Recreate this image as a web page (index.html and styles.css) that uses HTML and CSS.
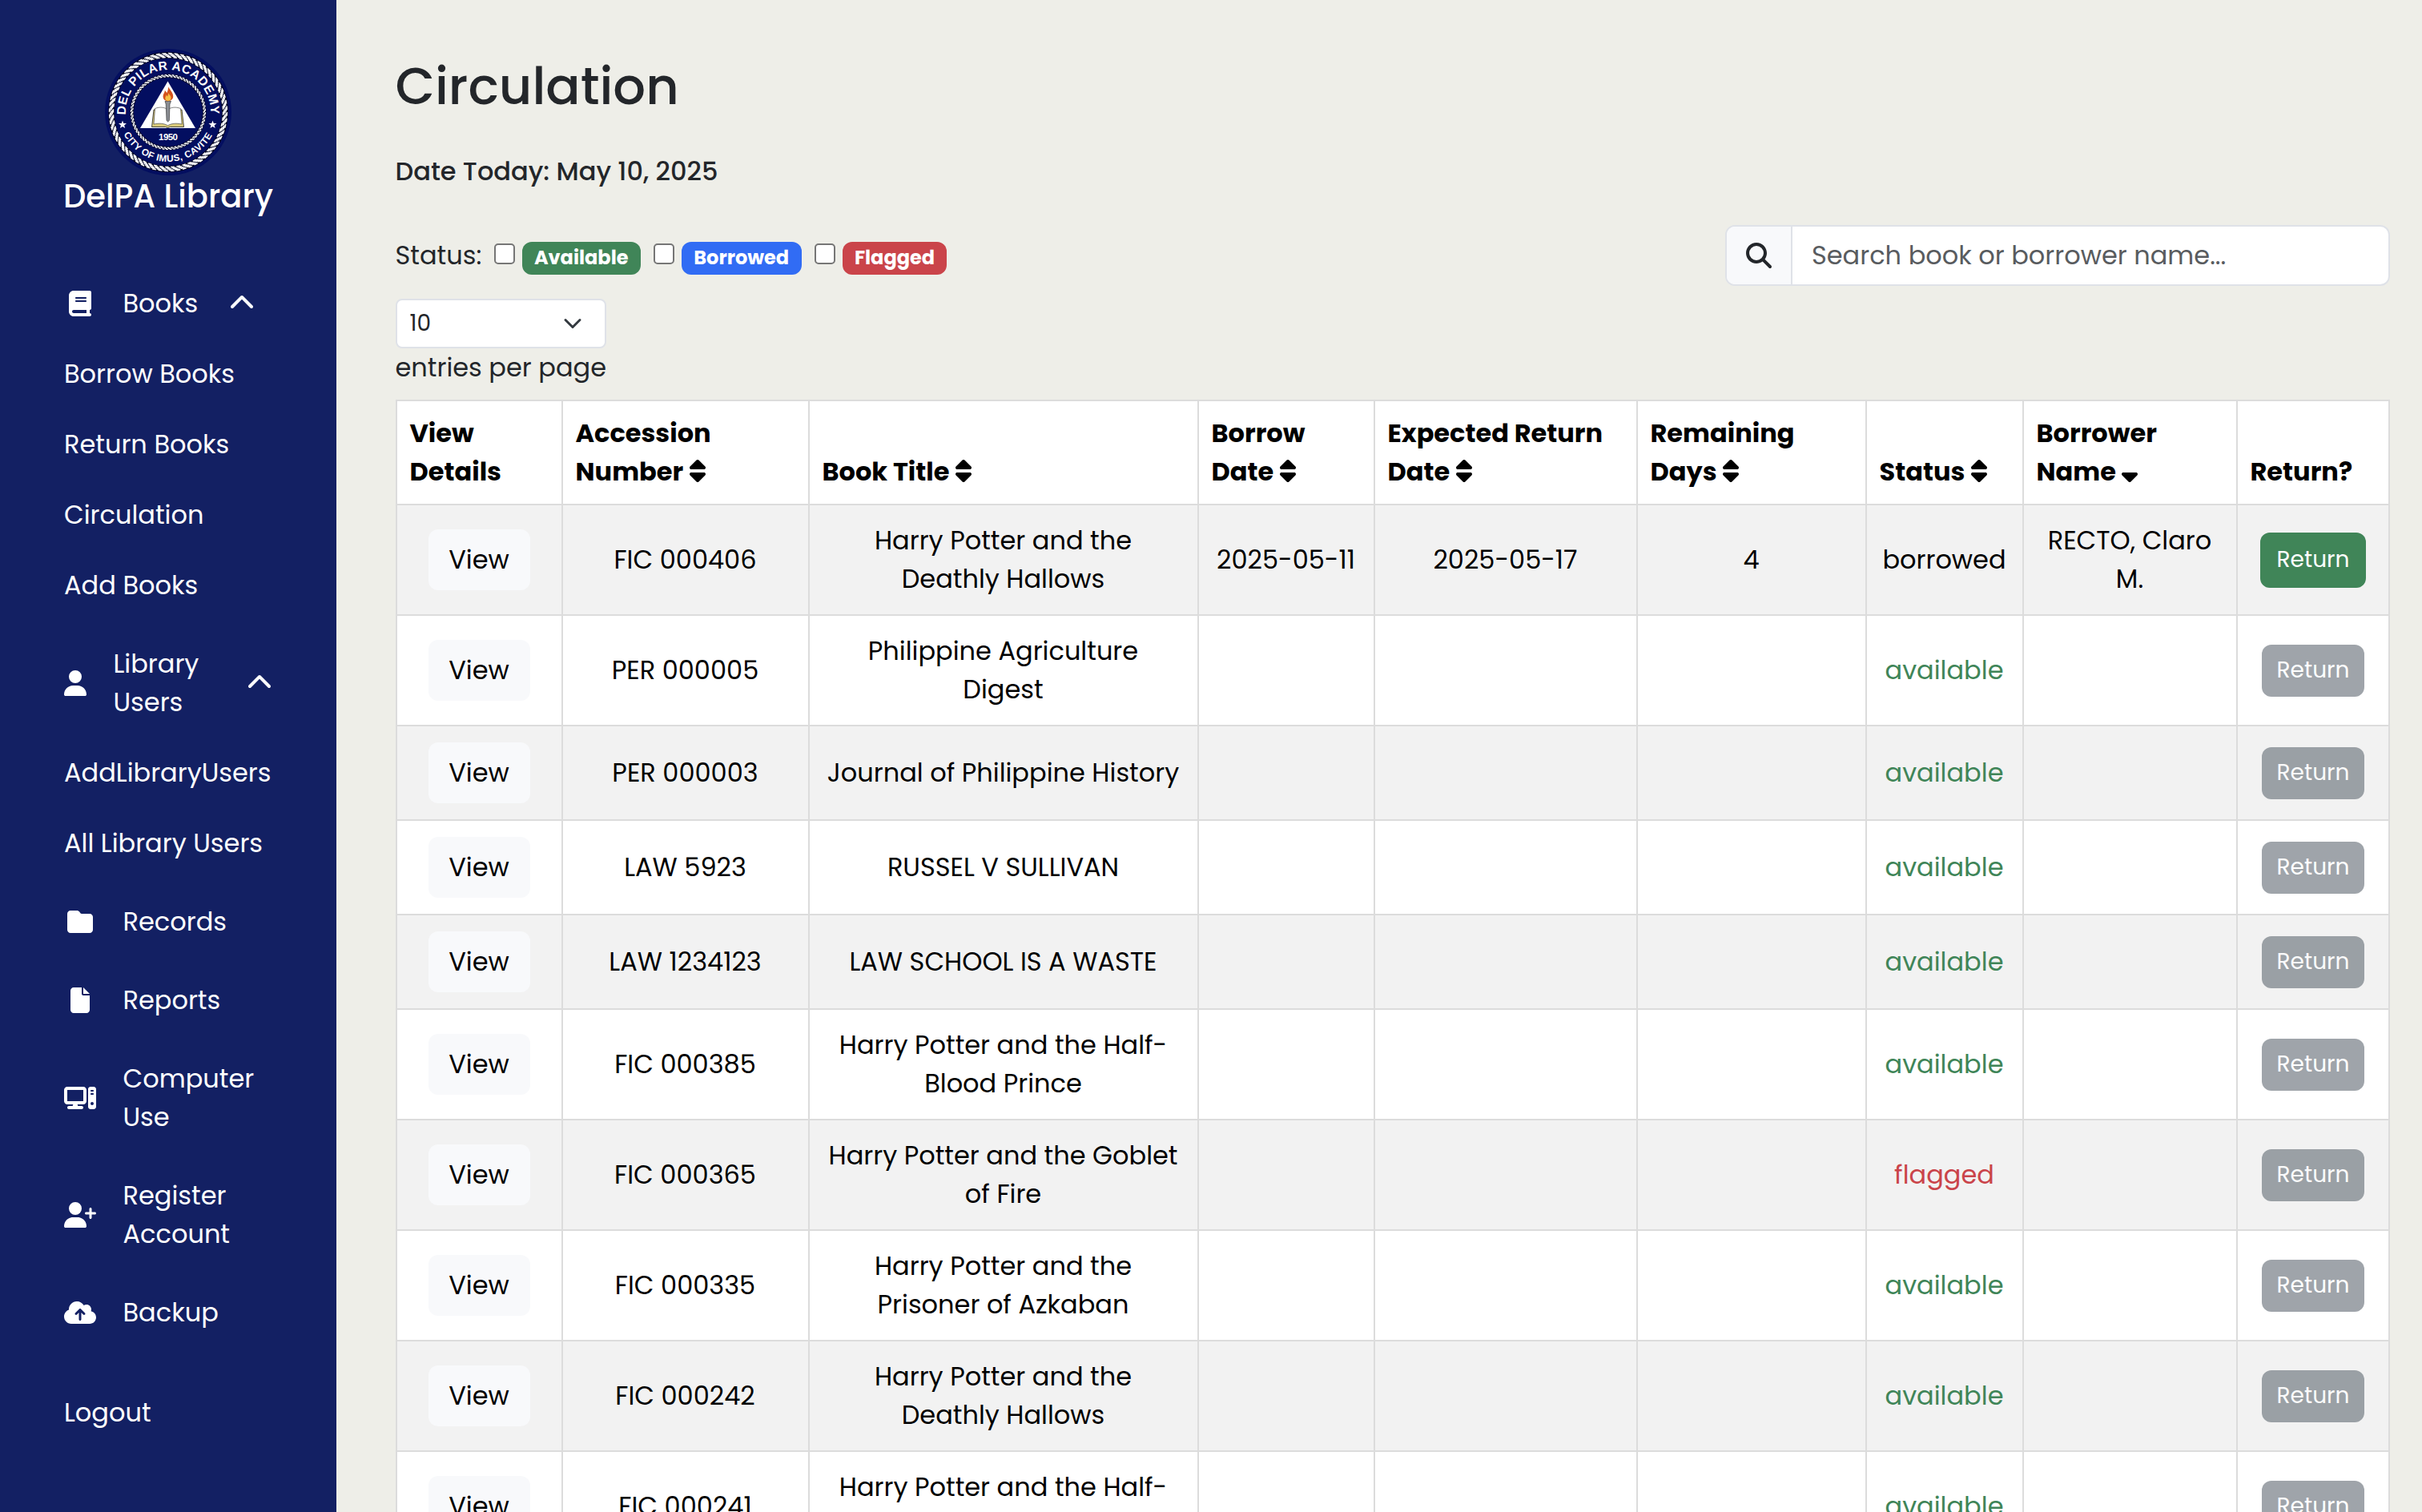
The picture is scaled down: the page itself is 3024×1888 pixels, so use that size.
FILE: index.html
```html
<!DOCTYPE html>
<html lang="en">
<head>
<meta charset="utf-8">
<title>Circulation - DelPA Library</title>
<link rel="stylesheet" href="styles.css">
</head>
<body>
<svg class="defs" aria-hidden="true">
  <symbol id="chevron-up" viewBox="0 0 512 512"><path d="M233.4 105.4c12.5-12.5 32.8-12.5 45.3 0l192 192c12.5 12.5 12.5 32.8 0 45.3s-32.8 12.5-45.3 0L256 173.3 86.6 342.6c-12.500 12.500-32.800 12.500-45.300 0s-12.500-32.800 0-45.300l192-192z"/></symbol>
  <symbol id="sort" viewBox="0 0 320 512"><path d="M137.400 41.400c12.500-12.500 32.800-12.500 45.300 0l128 128c9.200 9.200 11.900 22.900 6.900 34.900s-16.600 19.800-29.600 19.800H32c-12.900 0-24.600-7.800-29.600-19.800s-2.200-25.700 6.900-34.900l128-128zm0 429.300l-128-128c-9.200-9.200-11.900-22.900-6.900-34.900s16.600-19.800 29.600-19.800H288c12.900 0 24.600 7.800 29.600 19.800s2.200 25.700-6.900 34.900l-128 128c-12.500 12.500-32.800 12.500-45.300 0z"/></symbol>
  <symbol id="sort-down" viewBox="0 0 320 512"><path d="M137.400 470.700l-128-128c-9.200-9.200-11.900-22.900-6.900-34.900s16.600-19.800 29.600-19.800H288c12.900 0 24.600 7.800 29.600 19.800s2.200 25.700-6.900 34.900l-128 128c-12.500 12.500-32.800 12.500-45.300 0z"/></symbol>
</svg>
<div class="app">
  <nav class="sidebar">
    <div class="brand">
      <svg class="seal" viewBox="-79 -79 158 158">
        <defs>
          <path id="arc-top" d="M-53 3.500A53.100 53.100 0 1 1 53 3.500"/>
          <path id="arc-bottom" d="M-55.500 27.500A62 62 0 0 0 55.500 27.500"/>
        </defs>
        <circle r="79" fill="#030e60"/>
        <g fill="none" stroke="#000524">
          <circle r="71" stroke-width="8"/>
          <circle r="45.300" stroke-width="4.500"/>
        </g>
        <g fill="none" stroke="#fff" stroke-width="1.500">
          <circle r="73.400" pathLength="60" stroke-dasharray=".62 .38"/>
          <circle r="72.200" pathLength="60" stroke-dasharray=".7 .3" stroke-dashoffset="-.2"/>
          <circle r="71" pathLength="60" stroke-dasharray=".74 .26" stroke-dashoffset="-.42"/>
          <circle r="69.800" pathLength="60" stroke-dasharray=".7 .3" stroke-dashoffset="-.66"/>
          <circle r="68.600" pathLength="60" stroke-dasharray=".62 .38" stroke-dashoffset="-.92"/>
        </g>
        <g fill="none" stroke="#fff" stroke-width="1.200">
          <circle r="46.500" pathLength="64" stroke-dasharray=".64 .36"/>
          <circle r="45.400" pathLength="64" stroke-dasharray=".72 .28" stroke-dashoffset="-.3"/>
          <circle r="44.300" pathLength="64" stroke-dasharray=".64 .36" stroke-dashoffset="-.65"/>
        </g>
        <g class="seal-text">
          <text font-size="15.500"><textPath href="#arc-top" textLength="172">DEL PILAR ACADEMY</textPath></text>
          <text font-size="11.800"><textPath href="#arc-bottom" textLength="136">CITY OF IMUS, CAVITE</textPath></text>
          <text font-size="11.500" x="0" y="35" text-anchor="middle" textLength="24">1950</text>
        </g>
        <path fill="#fff" d="M-57 10.500l1.300 3.500 3.700.1-2.900 2.300 1.100 3.600-3.200-2.100-3.100 2.100 1-3.600-2.900-2.300 3.700-.1zM55.500 10.500l1.300 3.500 3.700.1-2.900 2.300 1.100 3.600-3.200-2.100-3.100 2.100 1-3.600-2.900-2.300 3.700-.1z"/>
        <path fill="#fff" d="M-.5-38.500L34 20H-35z"/>
        <path fill="#d8c878" stroke="#222" stroke-width=".8" d="M-18-3l-2.500 21.500h17l3 1 3-1h17L17-3z"/>
        <path fill="#fff" stroke="#333" stroke-width=".6" d="M-16.500-4.500C-10-7-4-6-.5-3 3-6 9-7 15.500-4.500L17 15c-7-1.500-13-1-17.500 1.800C-5 14-11 13.500-18 15z"/>
        <path fill="#8a8d92" stroke="#222" stroke-width=".6" d="M-4-13.500H3.500L2 -10 1.300 10.500-.3 12-2 10.500-2.800-10z"/>
        <path fill="#d4521c" d="M.3-31.500c1.800 4 5.600 6.500 5.900 11.500.2 3.500-2.400 6-6.300 6.200-4 0-6.700-2.700-6.300-6.500.3-2.800 1.800-3.800 2.300-6.700 1.300 1 1.900 2 2.200 3.200C-.4-26-.3-28.500.3-31.500z"/>
        <path fill="#f6c045" d="M.2-24c.8 2.200 3.300 3.300 3.300 6.300 0 2.200-1.500 3.700-3.600 3.700s-3.900-1.500-3.600-3.800c.2-1.500 1-2 1.300-3.400.8.500 1.100 1 1.300 1.700.9-1 1.200-2.600 1.300-4.500z"/>
      </svg>
      <div class="brand-name">DelPA Library</div>
    </div>
    <ul class="menu">
      <li class="item books">
        <span class="icon"><svg class="w28" viewBox="0 0 448 512"><path d="M96 0C43 0 0 43 0 96V416c0 53 43 96 96 96H384h32c17.700 0 32-14.300 32-32s-14.300-32-32-32V384c17.700 0 32-14.300 32-32V32c0-17.700-14.300-32-32-32H384 96zm0 384H352v64H96c-17.700 0-32-14.300-32-32s14.300-32 32-32zm32-240c0-8.800 7.200-16 16-16H336c8.800 0 16 7.200 16 16s-7.200 16-16 16H144c-8.800 0-16-7.200-16-16zm16 48H336c8.800 0 16 7.200 16 16s-7.200 16-16 16H144c-8.800 0-16-7.200-16-16s7.200-16 16-16z"/></svg></span>
        <span class="label">Books</span>
        <svg class="chevron"><use href="#chevron-up"/></svg>
      </li>
      <li class="sub">Borrow Books</li>
      <li class="sub">Return Books</li>
      <li class="sub">Circulation</li>
      <li class="sub">Add Books</li>
      <li class="item users">
        <span class="icon"><svg class="w28" viewBox="0 0 448 512"><path d="M224 256A128 128 0 1 0 224 0a128 128 0 1 0 0 256zm-45.700 48C79.800 304 0 383.800 0 482.300C0 498.700 13.300 512 29.700 512H418.300c16.400 0 29.700-13.300 29.700-29.700C448 383.800 368.200 304 269.700 304H178.300z"/></svg></span>
        <span class="label">Library<br>Users</span>
        <svg class="chevron"><use href="#chevron-up"/></svg>
      </li>
      <li class="sub">AddLibraryUsers</li>
      <li class="sub">All Library Users</li>
      <li class="item">
        <span class="icon"><svg class="w32" viewBox="0 0 512 512"><path d="M64 480H448c35.300 0 64-28.700 64-64V160c0-35.300-28.700-64-64-64H288c-10.100 0-19.600-4.700-25.600-12.800L243.200 57.600C231.100 41.500 212.100 32 192 32H64C28.700 32 0 60.700 0 96V416c0 35.300 28.700 64 64 64z"/></svg></span>
        <span class="label">Records</span>
      </li>
      <li class="item">
        <span class="icon"><svg class="w24" viewBox="0 0 384 512"><path d="M0 64C0 28.700 28.700 0 64 0H224V128c0 17.700 14.300 32 32 32H384V448c0 35.300-28.700 64-64 64H64c-35.300 0-64-28.700-64-64V64zm384 64H256V0L384 128z"/></svg></span>
        <span class="label">Reports</span>
      </li>
      <li class="item">
        <span class="icon"><svg class="w40" viewBox="0 0 640 512"><path d="M384 96l0 224L64 320 64 96l320 0zM64 32C28.700 32 0 60.700 0 96L0 320c0 35.300 28.700 64 64 64l117.300 0-10.700 32L96 416c-17.700 0-32 14.300-32 32s14.300 32 32 32l256 0c17.700 0 32-14.300 32-32s-14.300-32-32-32l-74.700 0-10.700-32L384 384c35.300 0 64-28.700 64-64l0-224c0-35.300-28.700-64-64-64L64 32zm464 0c-26.500 0-48 21.500-48 48l0 352c0 26.500 21.500 48 48 48l64 0c26.500 0 48-21.500 48-48l0-352c0-26.500-21.500-48-48-48l-64 0zm16 64l32 0c8.800 0 16 7.200 16 16s-7.200 16-16 16l-32 0c-8.800 0-16-7.200-16-16s7.200-16 16-16zm-16 80c0-8.800 7.200-16 16-16l32 0c8.800 0 16 7.200 16 16s-7.200 16-16 16l-32 0c-8.800 0-16-7.200-16-16zm32 160a32 32 0 1 1 0 64 32 32 0 1 1 0-64z"/></svg></span>
        <span class="label">Computer<br>Use</span>
      </li>
      <li class="item">
        <span class="icon"><svg class="w40" viewBox="0 0 640 512"><path d="M96 128a128 128 0 1 1 256 0A128 128 0 1 1 96 128zM0 482.300C0 383.800 79.800 304 178.300 304h91.400C368.200 304 448 383.800 448 482.300c0 16.400-13.300 29.700-29.700 29.700H29.700C13.300 512 0 498.700 0 482.300zM504 312V248H440c-13.300 0-24-10.700-24-24s10.700-24 24-24h64V136c0-13.300 10.700-24 24-24s24 10.700 24 24v64h64c13.300 0 24 10.700 24 24s-10.700 24-24 24H552v64c0 13.300-10.700 24-24 24s-24-10.700-24-24z"/></svg></span>
        <span class="label">Register<br>Account</span>
      </li>
      <li class="item">
        <span class="icon"><svg class="w40" viewBox="0 0 640 512"><path d="M144 480C64.500 480 0 415.500 0 336c0-62.800 40.200-116.200 96.200-135.900c-.1-2.700-.2-5.400-.2-8.100c0-88.400 71.600-160 160-160c59.300 0 111 32.200 138.700 80.200C409.900 102 428.300 96 448 96c53 0 96 43 96 96c0 12.200-2.300 23.800-6.400 34.600C596 238.400 640 290.100 640 352c0 70.700-57.300 128-128 128H144zm79-217c-9.400 9.400-9.400 24.600 0 33.900s24.600 9.400 33.900 0l39-39V392c0 13.300 10.700 24 24 24s24-10.700 24-24V257.900l39 39c9.400 9.400 24.600 9.400 33.900 0s9.400-24.600 0-33.900l-80-80c-9.400-9.400-24.600-9.400-33.900 0l-80 80z"/></svg></span>
        <span class="label">Backup</span>
      </li>
      <li class="logout">Logout</li>
    </ul>
  </nav>

  <main class="content">
    <h1>Circulation</h1>
    <p class="today">Date Today: May 10, 2025</p>
    <div class="toolbar">
      <div class="filters">
        <span class="filters-label">Status:</span>
        <label class="filter"><input type="checkbox"><span class="badge green">Available</span></label>
        <label class="filter"><input type="checkbox"><span class="badge blue">Borrowed</span></label>
        <label class="filter"><input type="checkbox"><span class="badge red">Flagged</span></label>
      </div>
      <div class="search">
        <span class="search-icon"><svg class="w32" viewBox="0 0 512 512"><path d="M416 208c0 45.900-14.900 88.300-40 122.700L502.600 457.400c12.500 12.500 12.500 32.800 0 45.300s-32.800 12.500-45.300 0L330.700 376c-34.400 25.200-76.800 40-122.700 40C93.100 416 0 322.900 0 208S93.100 0 208 0S416 93.100 416 208zM208 352a144 144 0 1 0 0-288 144 144 0 1 0 0 288z"/></svg></span>
        <input class="search-input" type="text" placeholder="Search book or borrower name...">
      </div>
    </div>
    <div class="entries">
      <div class="select"><span>10</span><svg viewBox="0 0 16 16"><path d="m2 5 6 6 6-6"/></svg></div>
      <div>entries per page</div>
    </div>
    <table>
      <colgroup><col class="c1"><col class="c2"><col class="c3"><col class="c4"><col class="c5"><col class="c6"><col class="c7"><col class="c8"><col class="c9"></colgroup>
      <thead>
        <tr>
          <th>View<br>Details</th>
          <th>Accession<br>Number <svg class="sort"><use href="#sort"/></svg></th>
          <th>Book Title <svg class="sort"><use href="#sort"/></svg></th>
          <th>Borrow<br>Date <svg class="sort"><use href="#sort"/></svg></th>
          <th>Expected Return<br>Date <svg class="sort"><use href="#sort"/></svg></th>
          <th>Remaining<br>Days <svg class="sort"><use href="#sort"/></svg></th>
          <th>Status <svg class="sort"><use href="#sort"/></svg></th>
          <th>Borrower<br>Name <svg class="sort"><use href="#sort-down"/></svg></th>
          <th>Return?</th>
        </tr>
      </thead>
      <tbody>
        <tr><td><button class="view">View</button></td><td>FIC 000406</td><td>Harry Potter and the<br>Deathly Hallows</td><td>2025-05-11</td><td>2025-05-17</td><td>4</td><td>borrowed</td><td>RECTO, Claro<br>M.</td><td><button class="return active">Return</button></td></tr>
        <tr><td><button class="view">View</button></td><td>PER 000005</td><td>Philippine Agriculture<br>Digest</td><td></td><td></td><td></td><td class="ok">available</td><td></td><td><button class="return">Return</button></td></tr>
        <tr><td><button class="view">View</button></td><td>PER 000003</td><td>Journal of Philippine History</td><td></td><td></td><td></td><td class="ok">available</td><td></td><td><button class="return">Return</button></td></tr>
        <tr><td><button class="view">View</button></td><td>LAW 5923</td><td>RUSSEL V SULLIVAN</td><td></td><td></td><td></td><td class="ok">available</td><td></td><td><button class="return">Return</button></td></tr>
        <tr><td><button class="view">View</button></td><td>LAW 1234123</td><td>LAW SCHOOL IS A WASTE</td><td></td><td></td><td></td><td class="ok">available</td><td></td><td><button class="return">Return</button></td></tr>
        <tr><td><button class="view">View</button></td><td>FIC 000385</td><td>Harry Potter and the Half-<br>Blood Prince</td><td></td><td></td><td></td><td class="ok">available</td><td></td><td><button class="return">Return</button></td></tr>
        <tr><td><button class="view">View</button></td><td>FIC 000365</td><td>Harry Potter and the Goblet<br>of Fire</td><td></td><td></td><td></td><td class="flag">flagged</td><td></td><td><button class="return">Return</button></td></tr>
        <tr><td><button class="view">View</button></td><td>FIC 000335</td><td>Harry Potter and the<br>Prisoner of Azkaban</td><td></td><td></td><td></td><td class="ok">available</td><td></td><td><button class="return">Return</button></td></tr>
        <tr><td><button class="view">View</button></td><td>FIC 000242</td><td>Harry Potter and the<br>Deathly Hallows</td><td></td><td></td><td></td><td class="ok">available</td><td></td><td><button class="return">Return</button></td></tr>
        <tr><td><button class="view">View</button></td><td>FIC 000241</td><td>Harry Potter and the Half-<br>Blood Prince</td><td></td><td></td><td></td><td class="ok">available</td><td></td><td><button class="return">Return</button></td></tr>
      </tbody>
    </table>
  </main>
</div>
</body>
</html>
```
FILE: styles.css
```css
*, *::before, *::after { box-sizing: border-box; }

body {
  margin: 0;
  font: 400 32px/48px Poppins, Inter, "Open Sans", sans-serif;
  color: #23262a;
  background: #eeeee8;
  overflow: hidden;
}

.defs { display: none; }
h1, p, ul { margin: 0; padding: 0; }
svg { display: block; fill: currentColor; }
button, input { font: inherit; }

.app {
  display: flex;
  height: 1888px;
  overflow: hidden;
}

/* Sidebar */
.sidebar {
  flex: none;
  width: 420px;
  padding: 61px 0 0 80px;
  color: #fff;
  background: #132063;
}

.brand {
  display: flex;
  flex-direction: column;
  align-items: center;
  width: 260px;
}

.seal { width: 158px; height: 158px; }
.seal-text { fill: #fff; font-family: "Liberation Sans", Arial, sans-serif; font-weight: 700; }

.brand-name {
  margin-top: -4px;
  font-size: 40px;
  font-weight: 500;
  line-height: 60px;
  white-space: nowrap;
}

.menu { list-style: none; padding-top: 30px; }
.item { display: flex; align-items: center; gap: 33.500px; margin-top: 50px; }
.sub { margin-top: 40px; white-space: nowrap; }
.logout { margin-top: 77px; }
.icon { display: flex; justify-content: center; width: 40px; }
.users .icon { width: 28px; }
.chevron { width: 32px; height: 32px; }
.books .chevron { margin-left: 5px; }
.users .chevron { margin-left: 26px; }

.w24 { width: 24px; height: 32px; }
.w28 { width: 28px; height: 32px; }
.w32 { width: 32px; height: 32px; }
.w40 { width: 40px; height: 32px; }

/* Main area */
.content { flex: 1; padding: 69px 40px 0 73.500px; }

h1 { font-size: 64px; font-weight: 500; line-height: 77px; }
.today { margin-top: 44px; font-weight: 500; }

.toolbar {
  display: flex;
  justify-content: space-between;
  align-items: center;
  margin-top: 43px;
}

.filters { display: flex; }
.filters-label { width: 107px; }
.filter { display: flex; align-items: flex-start; }

.filter input {
  appearance: none;
  width: 26px;
  height: 26px;
  margin: 9px 9px 0 16px;
  border: 2px solid #767676;
  border-radius: 5px;
  background: #fff;
}

.badge {
  margin-top: 7px;
  padding: 8.400px 15.400px;
  border-radius: 12px;
  font-size: 24px;
  font-weight: 700;
  line-height: 24px;
  color: #fff;
}

.green { background: #408558; }
.blue { background: #316cf4; }
.red { background: #ca444a; }

.search {
  display: flex;
  width: 830px;
  height: 76px;
  border: 2px solid #dfe2e8;
  border-radius: 12px;
  background: #fff;
  overflow: hidden;
}

.search-icon {
  display: flex;
  align-items: center;
  padding: 0 24px;
  border-right: 2px solid #dfe2e8;
  background: #f8f9fb;
}

.search-input { flex: 1; padding: 0 24px; border: 0; outline: 0; color: inherit; background: none; }
.search-input::placeholder { color: #595c5f; opacity: 1; }

.entries { width: 263px; margin: 16px 0; white-space: nowrap; }

.select {
  display: flex;
  justify-content: space-between;
  align-items: center;
  height: 62px;
  padding: 0 24px 0 16px;
  border: 2px solid #dfe2e8;
  border-radius: 8px;
  background: #fff;
  font-size: 28px;
}

.select svg {
  width: 32px;
  height: 24px;
  fill: none;
  stroke: #343a40;
  stroke-width: 2;
  stroke-linecap: round;
  stroke-linejoin: round;
}

/* Table */
table {
  width: 2490px;
  table-layout: fixed;
  border-collapse: collapse;
  color: #000;
  background: #fff;
}

.c1 { width: 207px; }
.c2 { width: 308px; }
.c3 { width: 486px; }
.c4 { width: 220px; }
.c5 { width: 328px; }
.c6 { width: 286px; }
.c7 { width: 196px; }
.c8 { width: 267px; }
.c9 { width: 190px; }

th, td { border: 2px solid #dcdcdc; white-space: nowrap; }
th { padding: 16px; text-align: left; vertical-align: bottom; font-weight: 700; }
td { padding: 20px 0; text-align: center; vertical-align: middle; }
tbody tr:nth-child(odd) { background: #f2f2f2; }

.sort { display: inline-block; width: 20px; height: 32px; margin-left: .6px; vertical-align: -4px; }
.ok { color: #408558; }
.flag { color: #ca444a; }

button { display: block; margin: 0 auto; padding: 0; border: 0; border-radius: 12px; }
.view { width: 127px; height: 76px; color: #000; background: #f8f9fb; }

.return {
  width: 128px;
  height: 65px;
  padding-left: 1px;
  font-size: 28px;
  line-height: 42px;
  color: #fff;
  background: #6c757d;
  opacity: .65;
}

.return.active { width: 132px; height: 69px; background: #408558; opacity: 1; }
```
